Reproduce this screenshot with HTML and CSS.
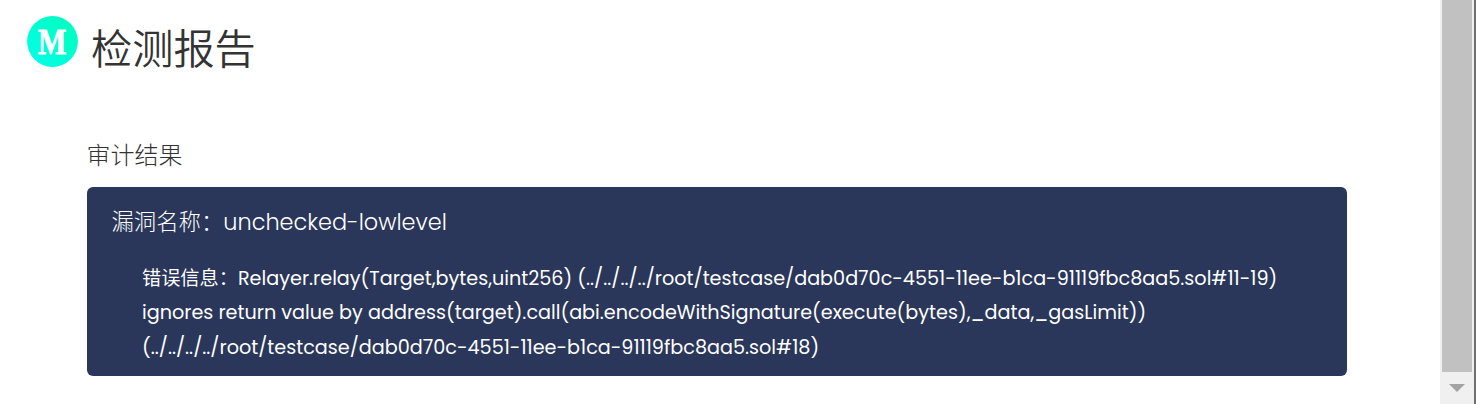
FILE: index.html
```html
<!DOCTYPE html>
<html lang="zh-CN">
<head>
<meta charset="utf-8">
<title>检测报告</title>
<link rel="stylesheet" href="styles.css">
</head>
<body>
<div class="window">
  <main class="page">
    <header class="header">
      <svg class="logo" viewBox="0 0 52 52" aria-hidden="true">
        <defs><linearGradient id="g" x1="0" y1="1" x2="1" y2="0"><stop offset="0" stop-color="#00ffec"/><stop offset="1" stop-color="#00ffb8"/></linearGradient></defs>
        <circle cx="26.5" cy="26.5" r="25.4" fill="url(#g)"/>
        <text class="logo-letter" x="12" y="38.8" textLength="28.4" lengthAdjust="spacingAndGlyphs">M</text>
      </svg>
      <h1 class="title">检测报告</h1>
    </header>
    <section class="report">
      <h2 class="subtitle">审计结果</h2>
      <article class="card">
        <h3 class="name">漏洞名称：unchecked-lowlevel</h3>
        <p class="message">错误信息：Relayer.relay(Target,bytes,uint256) (../../../../root/testcase/dab0d70c-4551-11ee-b1ca-91119fbc8aa5.sol#11-19)<br>ignores return value by address(target).call(abi.encodeWithSignature(execute(bytes),_data,_gasLimit))<br>(../../../../root/testcase/dab0d70c-4551-11ee-b1ca-91119fbc8aa5.sol#18)</p>
      </article>
    </section>
  </main>
  <div class="scrollbar">
    <div class="thumb"></div>
    <svg class="arrow" viewBox="0 0 16 8"><path d="M0 0H16L8 8Z"/></svg>
  </div>
</div>
</body>
</html>
```
FILE: styles.css
```css
* { box-sizing: border-box; }
body {
  margin: 0;
  background: #fff;
  color: #333;
  font-family: Poppins, Inter, "Noto Sans CJK SC", sans-serif;
}
h1, h2, h3, p { margin: 0; }
h1, h2, h3 { font-weight: 300; }
.window { display: flex; height: 404px; overflow: hidden; }
.page { flex: 1; }
.header { display: flex; padding: 15px 0 0 26px; height: 135px; }
.logo { width: 52px; height: 52px; margin-right: 13px; }
.logo-letter { font: bold 35px "Liberation Serif", serif; fill: #fff; stroke: #fff; stroke-width: .8px; }
.title { font-size: 41.2px; line-height: 60px; padding-top: 5px; font-weight: 350; }
.report { padding-left: 87px; width: 1347px; }
.subtitle { font-size: 24px; line-height: 42px; height: 52px; margin-left: -.5px; }
.card { height: 189px; padding: 18px 24px; border-radius: 6px; background: #2a375a; color: #fff; }
.name { font-size: 22.4px; line-height: 34px; padding-left: .4px; white-space: nowrap; }
.message { padding: 22.5px 0 0 31px; font-size: 19.2px; line-height: 1.8; white-space: nowrap; }
.scrollbar {
  display: flex;
  flex-direction: column;
  align-items: center;
  width: 36px;
  background: #f0f0f0;
  border-right: 2px solid #707070;
}
.thumb { width: 30px; height: 372px; background: #c1c1c1; }
.arrow { width: 16px; height: 8px; margin-top: 12px; fill: #a3a3a3; }
```
